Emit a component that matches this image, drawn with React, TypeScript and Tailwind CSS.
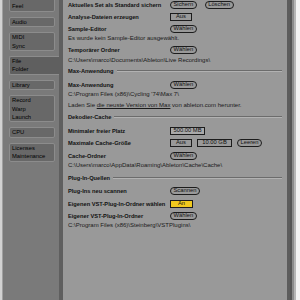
import React from "react";

// Small helpers for the preferences panel
function Pill({ children }: { children: React.ReactNode }) {
  return (
    <span className="flex h-[8px] items-center rounded-full border border-[#1c1c1c] px-[2.5px] text-[5.8px] leading-none">
      {children}
    </span>
  );
}

function Box({ children, w, yellow }: { children: React.ReactNode; w: string; yellow?: boolean }) {
  return (
    <span
      className={
        "flex h-[8px] items-center justify-center border border-[#1c1c1c] text-[5.8px] leading-none " +
        w +
        (yellow ? " bg-[#f0c91e]" : "")
      }
    >
      {children}
    </span>
  );
}

function Row({ label, mt, children }: { label: string; mt: string; children?: React.ReactNode }) {
  return (
    <div className={"flex h-[9px] items-center " + mt}>
      <div className="w-[102px] shrink-0 whitespace-nowrap text-[5.7px] font-bold">{label}</div>
      <div className="flex items-center gap-[8px]">{children}</div>
    </div>
  );
}

function Sub({ mt, children }: { mt: string; children: React.ReactNode }) {
  return <div className={"flex h-[9px] items-center whitespace-nowrap text-[6px] text-[#1a1a1a] " + mt}>{children}</div>;
}

function Header({ label, mt }: { label: string; mt: string }) {
  return (
    <div className={"flex h-[9px] items-center gap-[3px] " + mt}>
      <span className="whitespace-nowrap text-[5.7px] font-bold">{label}</span>
      <div className="h-0 flex-1 border-t border-b border-t-[#6c6c6c] border-b-[#b2b2b2]" />
    </div>
  );
}

const tabs = [
  { lines: ["Look", "Feel"] },
  { lines: ["Audio"] },
  { lines: ["MIDI", "Sync"] },
  { lines: ["File", "Folder"], active: true },
  { lines: ["Library"] },
  { lines: ["Record", "Warp", "Launch"] },
  { lines: ["CPU"] },
  { lines: ["Licenses", "Maintenance"] },
];

export default function App() {
  return (
    <div className="flex h-[300px] w-[300px] overflow-hidden bg-white font-['Liberation_Sans',Arial,sans-serif] text-[#111]">
      {/* left frame edge */}
      <div className="w-[2px] bg-[#d2d2d2]" />
      <div className="w-[1px] bg-[#a0a0a0]" />

      {/* Tab column */}
      <div className="w-[56px] bg-[#7a7a7a] pl-[6px]">
        <div className="-mt-[7px] flex flex-col gap-[5px]">
          {tabs.map((t) => (
            <div
              key={t.lines[0]}
              className={
                t.active
                  ? "w-[50px] rounded-l-[2px] border border-r-0 border-[#8c8c8c] bg-[#5f5f5f] pl-[2px] text-[5.8px] leading-[8.4px] text-black"
                  : "w-[46px] rounded-[2px] border border-[#8c8c8c] bg-[#686868] pl-[2px] text-[5.8px] leading-[8.4px] text-black"
              }
            >
              {t.lines.map((l) => (
                <div key={l}>{l}</div>
              ))}
            </div>
          ))}
        </div>
      </div>

      <div className="w-[4px] bg-[#5f5f5f]" />

      {/* Settings */}
      <div className="flex w-[224px] flex-col bg-[#999999] pl-[5px] pr-[5px] pt-[0.5px]">
        <Row label="Aktuelles Set als Standard sichern" mt="">
          <Pill>Sichern</Pill>
          <Pill>Löschen</Pill>
        </Row>
        <Row label="Analyse-Dateien erzeugen" mt="mt-[3px]">
          <Box w="w-[22px]">Aus</Box>
        </Row>
        <Row label="Sample-Editor" mt="mt-[3px]">
          <Pill>Wählen</Pill>
        </Row>
        <Sub mt="">Es wurde kein Sample-Editor ausgewählt.</Sub>
        <Row label="Temporärer Ordner" mt="mt-[3px]">
          <Pill>Wählen</Pill>
        </Row>
        <Sub mt="mt-[1px]">C:\Users\marco\Documents\Ableton\Live Recordings\</Sub>

        <Header label="Max-Anwendung" mt="mt-[2px]" />
        <Row label="Max-Anwendung" mt="mt-[5px]">
          <Pill>Wählen</Pill>
        </Row>
        <Sub mt="">C:\Program Files (x86)\Cycling '74\Max 7\</Sub>
        <Sub mt="mt-[2px]">
          Laden Sie&nbsp;<span className="underline">die neuste Version von Max</span>&nbsp;von ableton.com herunter.
        </Sub>

        <Header label="Dekodier-Cache" mt="mt-[3px]" />
        <Row label="Minimaler freier Platz" mt="mt-[5px]">
          <Box w="w-[35px] bg-[#a9a9a9]">500.00 MB</Box>
        </Row>
        <Row label="Maximale Cache-Größe" mt="mt-[3px]">
          <div className="flex items-center gap-[5px]">
            <Box w="w-[22px]">Aus</Box>
            <Box w="w-[35px]">10.00 GB</Box>
            <Pill>Leeren</Pill>
          </div>
        </Row>
        <Row label="Cache-Ordner" mt="mt-[4px]">
          <Pill>Wählen</Pill>
        </Row>
        <Sub mt="">C:\Users\marco\AppData\Roaming\Ableton\Cache\Cache\</Sub>

        <Header label="Plug-In-Quellen" mt="mt-[4px]" />
        <Row label="Plug-Ins neu scannen" mt="mt-[4px]">
          <Pill>Scannen</Pill>
        </Row>
        <Row label="Eigenen VST-Plug-In-Ordner wählen" mt="mt-[4px]">
          <Box w="w-[23px]" yellow>
            An
          </Box>
        </Row>
        <Row label="Eigener VST-Plug-In-Ordner" mt="mt-[3px]">
          <Pill>Wählen</Pill>
        </Row>
        <Sub mt="">C:\Program Files (x86)\Steinberg\VSTPlugins\</Sub>
      </div>

      {/* right frame edge */}
      <div className="w-[3px] bg-[#5d5d5d]" />
      <div className="w-[2px] bg-[#545454]" />
      <div className="w-[2px] bg-[#8a8a8a]" />
      <div className="w-[2px] bg-[#b5b5b5]" />
      <div className="w-[4px] bg-[#f2f2f2]" />
    </div>
  );
}
